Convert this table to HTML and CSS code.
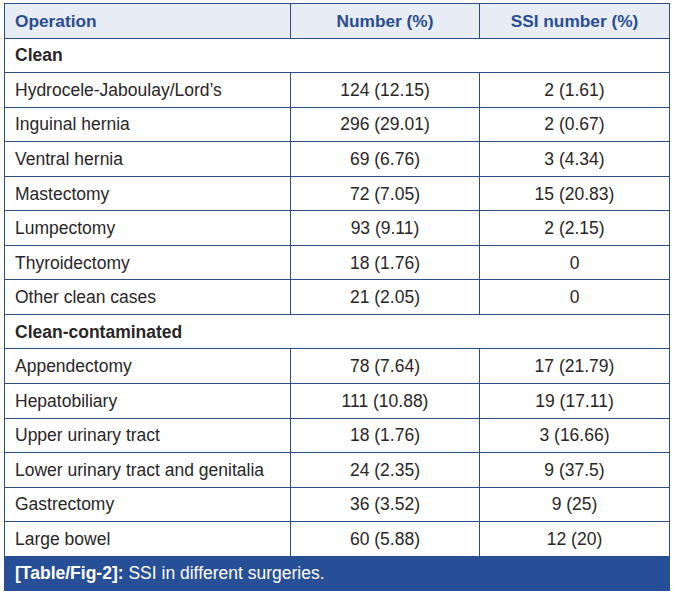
FILE: index.html
```html
<!DOCTYPE html>
<html>
<head>
<meta charset="utf-8">
<link rel="stylesheet" href="styles.css">
</head>
<body>
<div class="wrap">
<table class="tbl">
  <colgroup>
    <col class="c1"><col class="c2"><col class="c3">
  </colgroup>
  <thead>
    <tr class="head"><th class="l">Operation</th><th>Number (%)</th><th>SSI number (%)</th></tr>
  </thead>
  <tbody>
    <tr class="group"><td colspan="3">Clean</td></tr>
    <tr><td class="l">Hydrocele-Jaboulay/Lord’s</td><td>124 (12.15)</td><td>2 (1.61)</td></tr>
    <tr><td class="l">Inguinal hernia</td><td>296 (29.01)</td><td>2 (0.67)</td></tr>
    <tr><td class="l">Ventral hernia</td><td>69 (6.76)</td><td>3 (4.34)</td></tr>
    <tr><td class="l">Mastectomy</td><td>72 (7.05)</td><td>15 (20.83)</td></tr>
    <tr><td class="l">Lumpectomy</td><td>93 (9.11)</td><td>2 (2.15)</td></tr>
    <tr><td class="l">Thyroidectomy</td><td>18 (1.76)</td><td>0</td></tr>
    <tr><td class="l">Other clean cases</td><td>21 (2.05)</td><td>0</td></tr>
    <tr class="group"><td colspan="3">Clean-contaminated</td></tr>
    <tr><td class="l">Appendectomy</td><td>78 (7.64)</td><td>17 (21.79)</td></tr>
    <tr><td class="l">Hepatobiliary</td><td>111 (10.88)</td><td>19 (17.11)</td></tr>
    <tr><td class="l">Upper urinary tract</td><td>18 (1.76)</td><td>3 (16.66)</td></tr>
    <tr><td class="l">Lower urinary tract and genitalia</td><td>24 (2.35)</td><td>9 (37.5)</td></tr>
    <tr><td class="l">Gastrectomy</td><td>36 (3.52)</td><td>9 (25)</td></tr>
    <tr><td class="l">Large bowel</td><td>60 (5.88)</td><td>12 (20)</td></tr>
  </tbody>
</table>
<div class="caption"><b>[Table/Fig-2]:</b> SSI in different surgeries.</div>
</div>
</body>
</html>
```

FILE: styles.css
```css
html, body {
  margin: 0;
  padding: 0;
  background: #ffffff;
}
body {
  font-family: "Liberation Sans", Arial, sans-serif;
  color: #2a2627;
}
.wrap {
  padding: 3px 0 0 4px;
  width: 665px;
}
.tbl {
  border-collapse: collapse;
  width: 665px;
  table-layout: fixed;
  font-size: 17.5px;
}
.c1 { width: 286px; }
.c2 { width: 189px; }
.c3 { width: 190px; }
.tbl th, .tbl td {
  border: 1px solid #2c4c86;
  height: 34.56px;
  padding: 0 10px;
  text-align: center;
  vertical-align: middle;
  box-sizing: border-box;
  line-height: 20px;
}
.tbl th.l, .tbl td.l {
  text-align: left;
}
.head th {
  background: #e8ecf5;
  color: #284d92;
  font-weight: bold;
  font-size: 17.3px;
}
.group td {
  text-align: left;
  font-weight: bold;
}
.caption {
  background: #274f98;
  color: #ffffff;
  height: 35px;
  line-height: 35px;
  padding-left: 11px;
  font-size: 17.5px;
  width: 655px;
  box-sizing: content-box;
  margin-top: -1px;
}
.caption b {
  font-weight: bold;
}
```
